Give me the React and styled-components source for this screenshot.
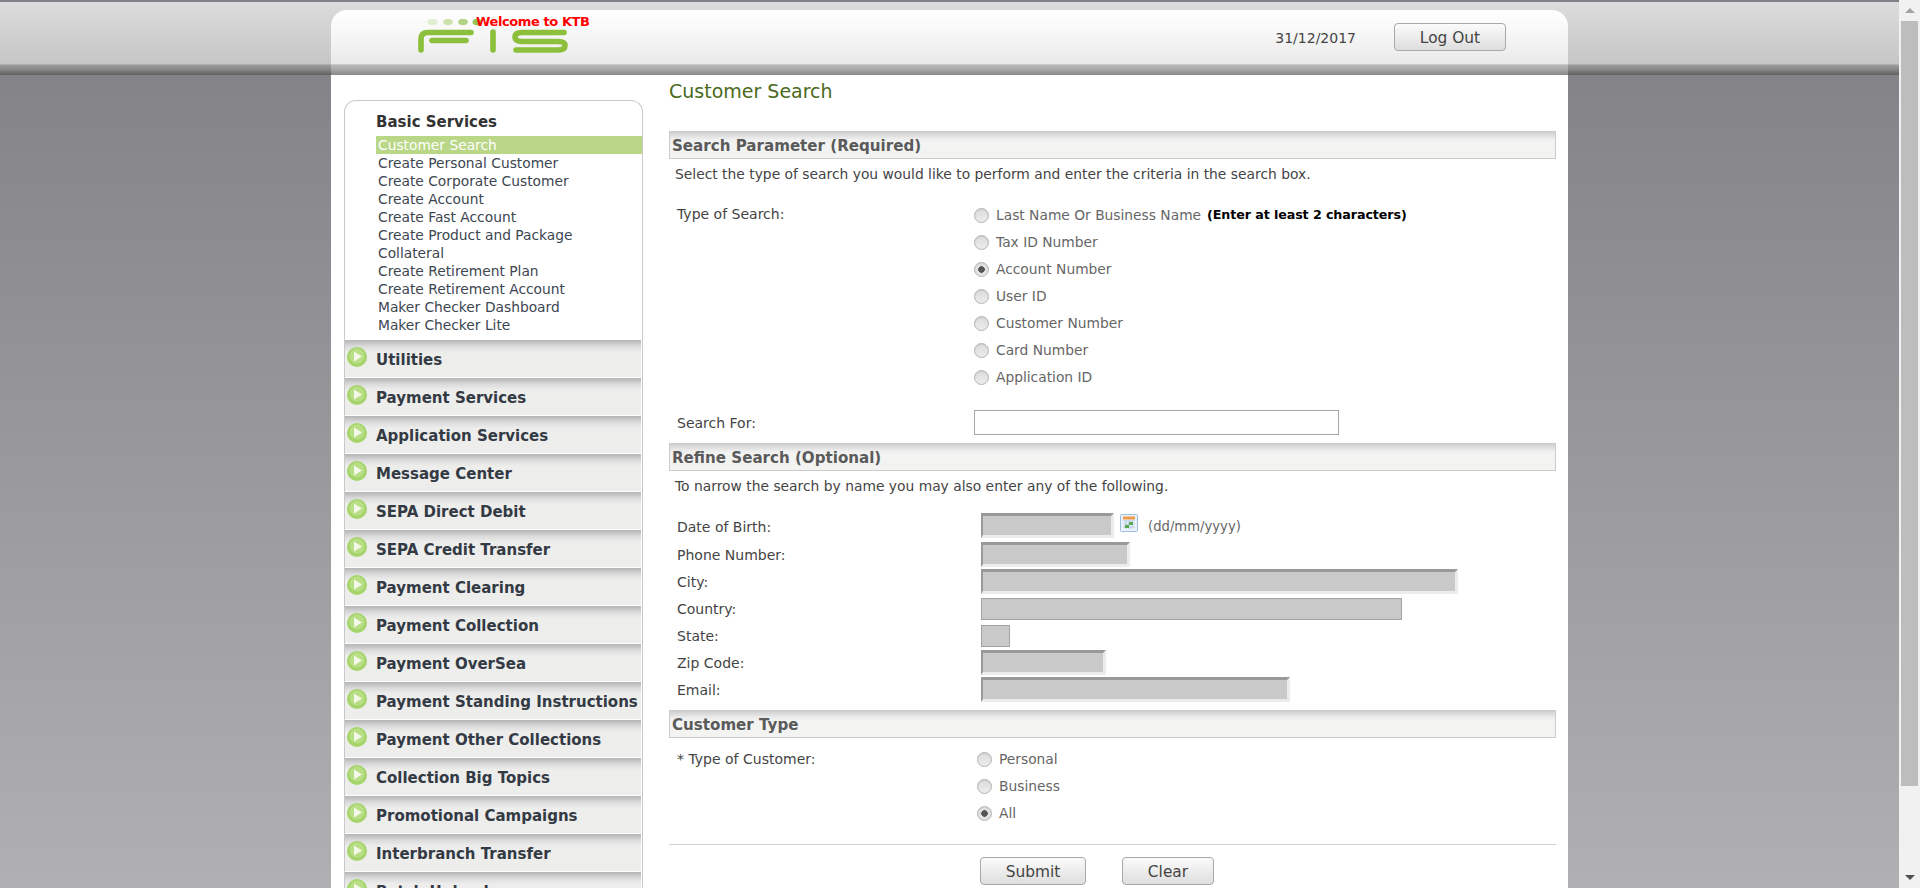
import React from "react";
import styled, { createGlobalStyle } from "styled-components";

const Global = createGlobalStyle`
  html, body { margin: 0; padding: 0; height: 100%; overflow: hidden; }
  body { font-family: "DejaVu Sans", Verdana, sans-serif; font-size: 14px; color: #444; }
  #root { height: 100%; }
`;

const Viewport = styled.div`
  display: flex;
  height: 888px;
  overflow: hidden;
`;
const Page = styled.div`
  flex: 1;
  min-width: 0;
  height: 888px;
  overflow: hidden;
  background: linear-gradient(#848388 75px, #b0b0b2 100%);
`;
const TopBand = styled.header`
  height: 75px;
  box-sizing: border-box;
  padding-top: 8px;
  border-top: 2px solid #808088;
  background: linear-gradient(#dcdcdc 0, #c6c6c6 62px, #9a9a9a 63px, #8a8a8a 67px, #5f5f5f 73px);
`;
const HeaderPanel = styled.div`
  width: 1237px;
  height: 65px;
  margin: 0 auto;
  display: flex;
  align-items: flex-start;
  justify-content: space-between;
  box-sizing: border-box;
  border-radius: 16px 16px 0 0;
  background: linear-gradient(rgba(255,255,255,1) 0, rgba(255,255,255,.6) 83%, rgba(255,255,255,.3) 84%, rgba(255,255,255,.25) 100%);
`;
const Brand = styled.div`
  position: relative;
  margin-left: 86px;
  margin-top: 9px;
  width: 160px;
  height: 34px;
`;
const Welcome = styled.span`
  position: absolute;
  left: 59px;
  top: -5px;
  font: bold 13px "DejaVu Sans", sans-serif;
  letter-spacing: -0.4px;
  color: #ff0000;
  white-space: nowrap;
`;
const HeaderRight = styled.div`
  display: flex;
  align-items: center;
  margin-right: 62px;
  margin-top: 13px;
`;
const DateText = styled.span`
  margin: 2px 38px 0 0;
  font-size: 14px;
  color: #444;
`;
const Button = styled.button`
  width: ${p => p.$w}px;
  height: 28px;
  box-sizing: border-box;
  padding: 1px 0 0;
  border: 1px solid #a8a8a8;
  border-radius: 4px;
  background: linear-gradient(#fbfbfb, #dedede);
  color: #444;
  font: 15.4px "DejaVu Sans", sans-serif;
`;
const Panel = styled.div`
  width: 1237px;
  height: 813px;
  margin: 0 auto;
  background: #fff;
  display: flex;
  align-items: flex-start;
  box-sizing: border-box;
  padding-left: 13px;
  overflow: hidden;
`;
const Sidebar = styled.nav`
  width: 299px;
  flex: none;
  margin-top: 25px;
  box-sizing: border-box;
  border: 1px solid #c8c8c8;
  border-bottom: 0;
  border-radius: 12px 12px 0 0;
  background: #fff;
`;
const SideTitle = styled.div`
  padding: 12px 0 0 31px;
  height: 35px;
  box-sizing: border-box;
  font-weight: bold;
  font-size: 15px;
  color: #333;
`;
const MenuList = styled.ul`
  list-style: none;
  margin: 0 0 6px 31px;
  padding: 0;
`;
const MenuItem = styled.li`
  height: 18px;
  line-height: 18px;
  padding-left: 2px;
  font-size: 13.8px;
  white-space: nowrap;
  background: ${p => (p.$active ? "#b9d787" : "transparent")};
  color: ${p => (p.$active ? "#fff" : "#3c4650")};
`;
const Section = styled.div`
  height: 38px;
  display: flex;
  align-items: flex-start;
  box-sizing: border-box;
  margin-right: 1px;
  border-bottom: 1px solid #fff;
  background: linear-gradient(#b4b4b6 0, #dadadb 6px, #ededec 12px);
`;
const SectionIcon = styled.svg`
  width: 22px;
  height: 22px;
  flex: none;
  margin: 6px 0 0 1px;
`;
const SectionText = styled.span`
  margin: 10px 0 0 8px;
  font-weight: bold;
  font-size: 15px;
  line-height: 20px;
  color: #333a44;
  white-space: nowrap;
`;
const Main = styled.main`
  flex: 1;
  min-width: 0;
  margin-left: 26px;
  margin-right: 12px;
`;
const Title = styled.h1`
  margin: 0;
  height: 56px;
  padding-top: 5px;
  box-sizing: border-box;
  font-weight: normal;
  font-size: 19px;
  line-height: 22px;
  color: #4a6a1c;
`;
const Bar = styled.div`
  height: 28px;
  box-sizing: border-box;
  border: 1px solid #cbcbcb;
  margin-top: ${p => p.$top || 0}px;
  background: linear-gradient(#cfcfcf 0, #eeeeee 7px, #f3f3f2 10px);
  padding: 4px 0 0 2px;
  font-weight: bold;
  font-size: 15.1px;
  line-height: 20px;
  color: #5a5a5a;
`;
const Intro = styled.p`
  margin: 0;
  height: ${p => p.$h}px;
  padding: 5px 0 0 6px;
  box-sizing: border-box;
  font-size: 13.85px;
  line-height: 20px;
  color: #444;
`;
const FieldRow = styled.div`
  display: grid;
  grid-template-columns: 304px 1fr;
  align-items: ${p => p.$align || "center"};
  min-height: ${p => p.$h}px;
  margin-bottom: ${p => p.$after || 0}px;
  padding-left: 8px;
`;
const Label = styled.label`
  margin-top: ${p => p.$top || 0}px;
  font-size: 14px;
  line-height: 20px;
  color: #444;
  white-space: nowrap;
`;
const RadioStack = styled.div`
  display: flex;
  flex-direction: column;
  margin-left: ${p => p.$left || 0}px;
  margin-top: ${p => p.$top || 0}px;
`;
const RadioRow = styled.div`
  height: 27px;
  display: flex;
  align-items: center;
  font-size: 13.8px;
  color: #666;
  white-space: nowrap;
`;
const RadioDot = styled.span`
  width: 15px;
  height: 15px;
  flex: none;
  margin: 2px 7px 0 0;
  box-sizing: border-box;
  border: 1px solid #b4b4b4;
  border-radius: 50%;
  background: ${p =>
    p.$on
      ? "radial-gradient(circle, #555 0 3px, #e2e2e2 3.6px)"
      : "linear-gradient(#dcdcdc, #ececec)"};
  box-shadow: inset 0 1px 1px rgba(0,0,0,.08);
`;
const Hint = styled.b`
  margin-left: 6px;
  font-size: 12.7px;
  letter-spacing: -0.1px;
  color: #000;
`;
const SearchBox = styled.input`
  display: block;
  width: 365px;
  height: 25px;
  box-sizing: border-box;
  border: 1px solid #a8a8a8;
  background: #fff;
  margin-left: -7px;
  padding: 0;
`;
const GrayInput = styled.input`
  display: block;
  width: ${p => p.$w}px;
  box-sizing: border-box;
  padding: 0;
  background: #c9c9c9;
  ${p =>
    p.$flat
      ? `height: 22px; border: 1px solid #a3a3a3;`
      : `height: 25px; border: 3px solid; border-color: #999 #ececec #ececec #999; border-width: 3px 3px 3px 2px;`}
`;
const DateCell = styled.div`
  display: flex;
  align-items: flex-start;
`;
const CalendarIcon = styled.svg`
  width: 18px;
  height: 18px;
  flex: none;
  margin: 1px 0 0 6px;
`;
const Format = styled.span`
  margin: 4px 0 0 10px;
  font-size: 13.2px;
  line-height: 20px;
  color: #666;
`;
const Divider = styled.hr`
  margin: 10px 0 12px;
  border: 0;
  border-top: 1px solid #cfcfcf;
`;
const Actions = styled.div`
  display: flex;
  gap: 36px;
  padding-left: 311px;
`;
const ScrollTrack = styled.div`
  width: 21px;
  flex: none;
  background: #f1f1f1;
  display: flex;
  flex-direction: column;
  align-items: stretch;
`;
const ScrollArrow = styled.div`
  height: 21px;
  display: flex;
  align-items: center;
  justify-content: center;
  margin-top: ${p => (p.$down ? "auto" : "0")};
  &::before {
    content: "";
    border-left: 5px solid transparent;
    border-right: 5px solid transparent;
    ${p => (p.$down ? "border-top: 5px solid #505050;" : "border-bottom: 5px solid #a3a3a3;")}
  }
`;
const ScrollThumb = styled.div`
  height: 765px;
  margin: 0 2px;
  background: #bdbdbd;
`;

const menu = [
  "Customer Search", "Create Personal Customer", "Create Corporate Customer", "Create Account",
  "Create Fast Account", "Create Product and Package", "Collateral", "Create Retirement Plan",
  "Create Retirement Account", "Maker Checker Dashboard", "Maker Checker Lite",
];
const sections = [
  "Utilities", "Payment Services", "Application Services", "Message Center", "SEPA Direct Debit",
  "SEPA Credit Transfer", "Payment Clearing", "Payment Collection", "Payment OverSea",
  "Payment Standing Instructions", "Payment Other Collections", "Collection Big Topics",
  "Promotional Campaigns", "Interbranch Transfer", "Batch Upload",
];
const searchTypes = [
  "Last Name Or Business Name", "Tax ID Number", "Account Number", "User ID",
  "Customer Number", "Card Number", "Application ID",
];

const FisLogo = () => (
  <svg width="160" height="34" viewBox="0 0 160 34" fill="none">
    <ellipse cx="15.5" cy="3" rx="5" ry="3.2" fill="#e2eed0" />
    <ellipse cx="31" cy="3" rx="5" ry="3.2" fill="#cfe3ae" />
    <ellipse cx="46" cy="3" rx="5" ry="3.2" fill="#b3d484" />
    <ellipse cx="60" cy="3" rx="4.5" ry="3.2" fill="#97c553" />
    <g stroke="#8cc03c" strokeWidth="5.6" strokeLinecap="round">
      <path d="M4 31 V20 Q4 13.5 11 13.5 H54" />
      <path d="M15 21.5 H49" />
      <path d="M76 13 V31" />
      <path d="M147 13.5 H105 Q98 13.5 98 18 Q98 22.5 105 22.5 H141 Q148 22.5 148 26.5 Q148 31 141 31 H99" />
    </g>
  </svg>
);

const GoIcon = () => (
  <SectionIcon viewBox="0 0 22 22">
    <circle cx="11" cy="11" r="10" fill="#a5d46a" />
    <circle cx="11" cy="10" r="7.5" fill="#b8df86" />
    <path d="M8 5.5 L16 10.5 L8 15.5 Z" fill="#f4f8ea" />
  </SectionIcon>
);

const Calendar = () => (
  <CalendarIcon viewBox="0 0 18 18">
    <rect x="0.5" y="0.5" width="17" height="17" rx="1" fill="#eaf2fb" stroke="#9bbde0" />
    <rect x="3" y="2.5" width="12" height="3" fill="#f09a4a" />
    <path d="M3 7h12M3 10h12M3 13h12M6 6v9M9 6v9M12 6v9" stroke="#b9cde2" strokeWidth="1" />
    <rect x="9" y="8" width="4" height="3" fill="#5ca84f" />
    <rect x="5" y="11" width="4" height="3" fill="#5ca84f" />
  </CalendarIcon>
);

const Radio = ({ on, children }) => (
  <RadioRow>
    <RadioDot $on={on} />
    {children}
  </RadioRow>
);

export default function App() {
  return (
    <Viewport>
      <Global />
      <Page>
        <TopBand>
          <HeaderPanel>
            <Brand>
              <FisLogo />
              <Welcome>Welcome to KTB</Welcome>
            </Brand>
            <HeaderRight>
              <DateText>31/12/2017</DateText>
              <Button $w={112}>Log Out</Button>
            </HeaderRight>
          </HeaderPanel>
        </TopBand>
        <Panel>
          <Sidebar>
            <SideTitle>Basic Services</SideTitle>
            <MenuList>
              {menu.map((m, i) => (
                <MenuItem key={m} $active={i === 0}>{m}</MenuItem>
              ))}
            </MenuList>
            {sections.map(s => (
              <Section key={s}>
                <GoIcon />
                <SectionText>{s}</SectionText>
              </Section>
            ))}
          </Sidebar>
          <Main>
            <Title>Customer Search</Title>
            <Bar>Search Parameter (Required)</Bar>
            <Intro $h={41}>Select the type of search you would like to perform and enter the criteria in the search box.</Intro>
            <FieldRow $align="start" $h={210}>
              <Label $top={4}>Type of Search:</Label>
              <RadioStack $left={-7} $top={1}>
                {searchTypes.map((t, i) => (
                  <Radio key={t} on={i === 2}>
                    {t}
                    {i === 0 && <Hint>(Enter at least 2 characters)</Hint>}
                  </Radio>
                ))}
              </RadioStack>
            </FieldRow>
            <FieldRow $h={25} $after={8}>
              <Label>Search For:</Label>
              <SearchBox readOnly />
            </FieldRow>
            <Bar>Refine Search (Optional)</Bar>
            <Intro $h={42}>To narrow the search by name you may also enter any of the following.</Intro>
            <FieldRow $h={28} $align="start">
              <Label $top={4}>Date of Birth:</Label>
              <DateCell>
                <GrayInput $w={133} readOnly />
                <Calendar />
                <Format>(dd/mm/yyyy)</Format>
              </DateCell>
            </FieldRow>
            <FieldRow $h={27}><Label>Phone Number:</Label><GrayInput $w={149} readOnly /></FieldRow>
            <FieldRow $h={27}><Label>City:</Label><GrayInput $w={477} readOnly /></FieldRow>
            <FieldRow $h={27}><Label>Country:</Label><GrayInput $w={421} $flat readOnly /></FieldRow>
            <FieldRow $h={27}><Label>State:</Label><GrayInput $w={29} $flat readOnly /></FieldRow>
            <FieldRow $h={27}><Label>Zip Code:</Label><GrayInput $w={125} readOnly /></FieldRow>
            <FieldRow $h={27}><Label>Email:</Label><GrayInput $w={309} readOnly /></FieldRow>
            <Bar $top={7}>Customer Type</Bar>
            <FieldRow $align="start" $h={96}>
              <Label $top={11}>* Type of Customer:</Label>
              <RadioStack $left={-4} $top={7}>
                <Radio>Personal</Radio>
                <Radio>Business</Radio>
                <Radio on>All</Radio>
              </RadioStack>
            </FieldRow>
            <Divider />
            <Actions>
              <Button $w={106}>Submit</Button>
              <Button $w={92}>Clear</Button>
            </Actions>
          </Main>
        </Panel>
      </Page>
      <ScrollTrack>
        <ScrollArrow />
        <ScrollThumb />
        <ScrollArrow $down />
      </ScrollTrack>
    </Viewport>
  );
}
